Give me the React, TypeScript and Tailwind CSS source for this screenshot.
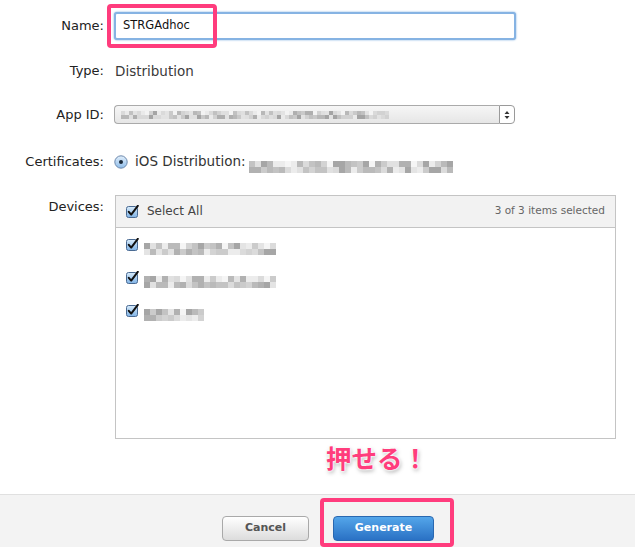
import type { ReactNode } from 'react'

const grays = ['#cfcfcf', '#bdbdbd', '#e2e2e2', '#a9a9a9', '#d8d8d8', '#eaeaea', '#b3b3b3', '#c6c6c6', '#9d9d9d', '#dedede']

function Mosaic({ width, seed, cell = 5 }: { width: number; seed: number; cell?: number }) {
  const cols = Math.round(width / cell)
  let s = seed
  const rnd = () => {
    s = (s * 9301 + 49297) % 233280
    return s / 233280
  }
  const rows = [0, 1].map((r) =>
    Array.from({ length: cols }, (_, i) => {
      const gap = (i + r) % 7 === 6 && r === 0
      return gap ? '#f4f4f4' : grays[Math.floor(rnd() * grays.length)]
    }),
  )
  return (
    <span className="inline-flex flex-col opacity-90">
      {rows.map((row, r) => (
        <span key={r} className="flex">
          {row.map((c, i) => (
            <span key={i} className="block" style={{ width: cell, height: cell, background: c }} />
          ))}
        </span>
      ))}
    </span>
  )
}

function CheckBox() {
  return (
    <svg width="13" height="13" viewBox="0 0 13 13" className="shrink-0">
      <defs>
        <linearGradient id="cbg" x1="0" y1="0" x2="0" y2="1">
          <stop offset="0" stopColor="#d9ecfb" />
          <stop offset="1" stopColor="#7fb2e5" />
        </linearGradient>
      </defs>
      <rect x="0.5" y="1.5" width="11" height="11" rx="2" fill="url(#cbg)" stroke="#4a6a92" />
      <path d="M2.8 6.8 L5.2 9.6 L11.8 0.8" fill="none" stroke="#111" strokeWidth="2" strokeLinecap="round" strokeLinejoin="round" />
    </svg>
  )
}

function Radio() {
  return (
    <svg width="14" height="14" viewBox="0 0 14 14" className="shrink-0">
      <defs>
        <linearGradient id="rbg" x1="0" y1="0" x2="0" y2="1">
          <stop offset="0" stopColor="#e3f0fc" />
          <stop offset="1" stopColor="#8dbbe8" />
        </linearGradient>
      </defs>
      <circle cx="7" cy="7" r="6.2" fill="url(#rbg)" stroke="#6d89ad" />
      <circle cx="7" cy="7" r="2" fill="#1b2a3a" />
    </svg>
  )
}

function Row({ label, children, className }: { label: string; children: ReactNode; className?: string }) {
  return (
    <div className={`flex ${className ?? 'items-center'}`}>
      <div className="w-[104px] shrink-0 text-right text-[13px] text-[#222]">{label}</div>
      <div className="ml-[10px] flex items-center">{children}</div>
    </div>
  )
}

export default function App() {
  const devices = [131, 131, 62]
  return (
    <div className="relative flex h-[547px] w-[635px] flex-col overflow-hidden bg-white font-['DejaVu_Sans',sans-serif]">
      <div className="flex flex-col pt-[12px]">
        <Row label="Name:">
          <div className="flex h-[28px] w-[402px] items-center rounded-[3px] border-[2px] border-[#86b3e3] bg-white pl-[7px] shadow-[0_0_2px_#6aa2dc] text-[11.5px] text-[#111]">
            STRGAdhoc
          </div>
        </Row>

        <Row label="Type:" className="mt-[21px] h-[20px] items-center">
          <span className="ml-[1px] text-[13.5px] text-[#3a3a3a]">Distribution</span>
        </Row>

        <Row label="App ID:" className="mt-[24px] items-center">
          <div className="flex h-[19px] w-[401px] items-center">
            <div className="flex h-full flex-1 items-center rounded-l-[4px] border border-r-0 border-[#aaa] bg-gradient-to-b from-[#f6f6f6] to-[#e6e6e6] pl-[6px]">
              <Mosaic width={268} seed={7} cell={4} />
            </div>
            <div className="flex h-full w-[16px] flex-col items-center justify-center rounded-r-[4px] border border-[#9a9a9a] bg-white">
              <svg width="6" height="10" viewBox="0 0 6 10">
                <path d="M3 1 L5.5 4 L0.5 4 Z M3 9 L5.5 6 L0.5 6 Z" fill="#333" />
              </svg>
            </div>
          </div>
        </Row>

        <Row label="Certificates:" className="mt-[27px] h-[20px] items-center">
          <div className="flex items-center">
            <Radio />
            <span className="ml-[7px] text-[13.5px] text-[#333]">iOS Distribution:</span>
            <span className="ml-[3px]">
              <Mosaic width={206} seed={23} cell={6} />
            </span>
          </div>
        </Row>

        <div className="mt-[23px] flex items-start">
          <div className="mt-[2px] w-[104px] shrink-0 text-right text-[13px] text-[#222]">Devices:</div>
          <div className="ml-[11px] flex h-[244px] w-[501px] flex-col border border-[#c4c4c4]">
            <div className="flex h-[32px] items-center justify-between border-b border-[#c4c4c4] bg-[#f2f2f2] pl-[10px] pr-[10px]">
              <div className="flex items-center">
                <CheckBox />
                <span className="ml-[8px] text-[12px] text-[#444]">Select All</span>
              </div>
              <span className="text-[10.5px] text-[#666]">3 of 3 items selected</span>
            </div>
            <div className="flex flex-col gap-[20px] pl-[10px] pt-[10px]">
              {devices.map((w, i) => (
                <div key={i} className="flex h-[13px] items-center">
                  <CheckBox />
                  <span className="ml-[5px]">
                    <Mosaic width={w} seed={41 + i * 13} cell={6} />
                  </span>
                </div>
              ))}
            </div>
          </div>
        </div>
      </div>

      <div className="mt-auto flex h-[53px] items-start gap-[24px] border-t border-[#e0e0e0] bg-[#f3f3f3] pl-[222px] pt-[21px]">
        <button className="h-[25px] w-[87px] rounded-[4px] border border-[#a9a9a9] bg-gradient-to-b from-[#ffffff] to-[#dcdcdc] text-[11px] font-bold text-[#555]">
          Cancel
        </button>
        <button className="h-[25px] w-[101px] rounded-[4px] border border-[#2a68b0] bg-gradient-to-b from-[#54a6ea] to-[#2a71c4] text-[11px] font-bold text-white">
          Generate
        </button>
      </div>

      <div className="absolute left-[107px] top-[4px] h-[44px] w-[110px] rounded-[4px] border-[4px] border-[#ff3c7d]" />
      <div className="absolute left-[320px] top-[498px] h-[49px] w-[134px] rounded-[4px] border-[4px] border-[#ff3c7d]" />
      <div className="absolute left-[326px] top-[440px] font-['Noto_Sans_CJK_JP',sans-serif] text-[25.5px] font-bold leading-[34px] text-[#ff3d7c] [text-shadow:0_0_2px_#fff,0_0_2px_#fff,0_0_3px_#fff,1px_2px_4px_rgba(0,0,0,0.35)]">
        押せる！
      </div>
    </div>
  )
}
